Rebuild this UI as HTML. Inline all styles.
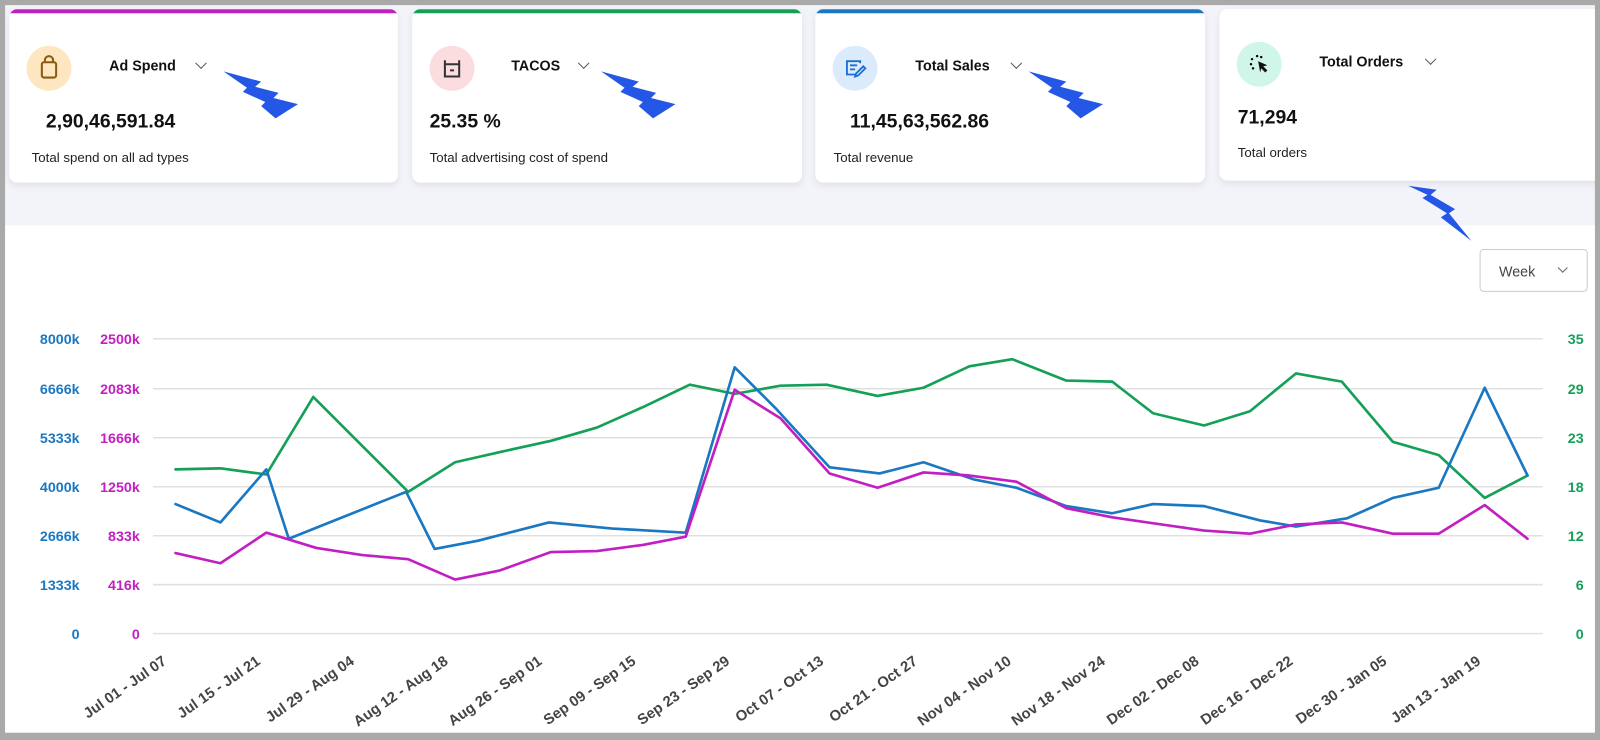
<!DOCTYPE html>
<html><head><meta charset="utf-8"><style>
*{margin:0;padding:0;box-sizing:border-box}
body{width:1600px;height:740px;overflow:hidden;background:#a9a9a9;font-family:"Liberation Sans",sans-serif;position:relative}
#w{position:absolute;left:0;top:0;width:1568px;height:725px;transform:scale(1.0204);transform-origin:0 0}
.frame{position:absolute;left:5px;top:5px;width:1558px;height:713px;background:#f3f4fa;overflow:hidden}
.card{position:absolute;top:4px;height:170px;background:#fff;border-radius:8px;box-shadow:0 3px 8px rgba(0,0,0,.08);overflow:hidden}
.bar{position:absolute;left:0;right:0;top:0;height:4px}
.ic{position:absolute;width:44px;height:44px;border-radius:50%;top:36px;left:17px}
.ttl{position:absolute;top:47px;font-size:14px;font-weight:bold;color:#111}
.chev{position:absolute;top:49px;width:8px;height:8px;border-right:1.3px solid #555;border-bottom:1.3px solid #555;transform:rotate(45deg)}
.val{position:absolute;font-size:19px;font-weight:bold;color:#111}
.sub{position:absolute;font-size:13px;color:#222}
.chart{position:absolute;left:0;top:216px;width:1558px;height:500px;background:#fff}
.week{position:absolute;left:1445px;top:239px;width:106px;height:42px;border:1px solid #ccc;border-radius:4px;background:#fff;font-size:14px;color:#444;padding:13px 0 0 18px}
.week i{position:absolute;left:77px;top:14px;width:7px;height:7px;border-right:1.2px solid #666;border-bottom:1.2px solid #666;transform:rotate(45deg)}
svg{position:absolute;left:0;top:0}
</style></head><body><div id="w">
<div class="frame">
<div class="card" style="left:4px;width:381px"><div class="bar" style="background:#c21fc2"></div>
<div class="ic" style="background:#fde6c0"><svg width="44" height="44" viewBox="0 0 44 44"><rect x="15" y="16" width="14" height="15" rx="2" fill="none" stroke="#8a5a10" stroke-width="2"/><path d="M18 16v-2a4 4 0 0 1 8 0v2" fill="none" stroke="#8a5a10" stroke-width="2"/></svg></div>
<div class="ttl" style="left:98px">Ad Spend</div><div class="chev" style="left:184px"></div>
<div class="val" style="left:36px;top:100px">2,90,46,591.84</div>
<div class="sub" style="left:22px;top:138px">Total spend on all ad types</div></div>

<div class="card" style="left:399px;width:382px"><div class="bar" style="background:#14a058"></div>
<div class="ic" style="background:#fbdde0"><svg width="44" height="44" viewBox="0 0 44 44"><path d="M15 14v16h14V14M15 18h14M20 24h4" fill="none" stroke="#333" stroke-width="2"/></svg></div>
<div class="ttl" style="left:97px">TACOS</div><div class="chev" style="left:164px"></div>
<div class="val" style="left:17px;top:100px">25.35 %</div>
<div class="sub" style="left:17px;top:138px">Total advertising cost of spend</div></div>

<div class="card" style="left:794px;width:382px"><div class="bar" style="background:#1a78c2"></div>
<div class="ic" style="background:#dcebfb"><svg width="44" height="44" viewBox="0 0 44 44"><path d="M27 17V15H14v13h8M17 19h7M17 23h5M22 30l1-3 7-7 2 2-7 7z" fill="none" stroke="#1a6fd0" stroke-width="1.8"/></svg></div>
<div class="ttl" style="left:98px">Total Sales</div><div class="chev" style="left:193px"></div>
<div class="val" style="left:34px;top:100px">11,45,63,562.86</div>
<div class="sub" style="left:18px;top:138px">Total revenue</div></div>

<div class="card" style="left:1190px;width:400px;height:168px">
<div class="ic" style="background:#d0f6ea;top:32px"><svg width="44" height="44" viewBox="0 0 44 44"><path d="M21 19l9 4-4 1 4 4-2 2-4-4-1 4z" fill="#111"/><circle cx="20" cy="14" r="1.2"/><circle cx="15" cy="17" r="1.2"/><circle cx="14" cy="22" r="1.2"/><circle cx="24" cy="15" r="1.2"/><circle cx="16" cy="26" r="1.2"/></svg></div>
<div class="ttl" style="left:98px;top:43px">Total Orders</div><div class="chev" style="left:203px;top:45px"></div>
<div class="val" style="left:18px;top:96px">71,294</div>
<div class="sub" style="left:18px;top:133px">Total orders</div></div>

<div class="chart"></div>
<div class="week">Week<i></i></div>
</div>
<svg width="1568" height="725" viewBox="0 0 1568 725">
<defs><polygon id="b" points="0,0 37,10 31,15 54,21 49,26 73,32 51,46 37,34 41,30 19,20 23,16"/></defs>
<use href="#b" x="219" y="70" fill="#2457e6"/>
<use href="#b" x="589" y="70" fill="#2457e6"/>
<use href="#b" x="1008" y="70" fill="#2457e6"/>
<polygon points="1380,182 1408,186 1402,191 1426,205 1420,209 1442,236 1412,213 1418,209 1394,194 1399,191" fill="#2457e6"/>
<g stroke="#e0e0e0" stroke-width="1.5">
<line x1="150" y1="332" x2="1512" y2="332"/><line x1="150" y1="381" x2="1512" y2="381"/><line x1="150" y1="429" x2="1512" y2="429"/><line x1="150" y1="477" x2="1512" y2="477"/><line x1="150" y1="525" x2="1512" y2="525"/><line x1="150" y1="573" x2="1512" y2="573"/><line x1="150" y1="621" x2="1512" y2="621"/>
</g>
<g font-size="14" font-weight="bold" text-anchor="end" fill="#1a78c2">
<text x="78" y="337">8000k</text><text x="78" y="386">6666k</text><text x="78" y="434">5333k</text><text x="78" y="482">4000k</text><text x="78" y="530">2666k</text><text x="78" y="578">1333k</text><text x="78" y="626">0</text></g>
<g font-size="14" font-weight="bold" text-anchor="end" fill="#c21fc2">
<text x="137" y="337">2500k</text><text x="137" y="386">2083k</text><text x="137" y="434">1666k</text><text x="137" y="482">1250k</text><text x="137" y="530">833k</text><text x="137" y="578">416k</text><text x="137" y="626">0</text></g>
<g font-size="14" font-weight="bold" text-anchor="end" fill="#14a058">
<text x="1552" y="337">35</text><text x="1552" y="386">29</text><text x="1552" y="434">23</text><text x="1552" y="482">18</text><text x="1552" y="530">12</text><text x="1552" y="578">6</text><text x="1552" y="626">0</text></g>
<g fill="none" stroke-width="2.6" stroke-linejoin="round" stroke-linecap="round">
<polyline stroke="#14a058" points="172,460 216,459 261,465 307,389 355,437 400,482 446,453 490,443 540,432 585,419 630,399 676,377 720,386 765,378 810,377 860,388 905,380 950,359 992,352 1045,373 1090,374 1130,405 1180,417 1225,403 1270,366 1315,374 1365,433 1410,446 1455,488 1497,466"/>
<polyline stroke="#1a78c2" points="172,494 216,512 261,460 283,528 328,510 398,482 426,538 468,530 538,512 600,518 672,522 720,360 760,400 813,458 862,464 905,453 955,470 996,478 1045,496 1090,503 1130,494 1180,496 1235,510 1270,516 1320,508 1365,488 1410,478 1455,380 1497,466"/>
<polyline stroke="#c21fc2" points="172,542 216,552 261,522 310,537 355,544 400,548 446,568 490,559 540,541 585,540 630,534 672,526 720,382 765,410 813,464 860,478 905,463 950,466 996,472 1045,498 1090,507 1180,520 1225,523 1270,514 1315,512 1365,523 1410,523 1455,495 1497,528"/>
</g>
<g font-size="14.5" font-weight="bold" fill="#444" text-anchor="end">
<text transform="translate(164,650) rotate(-35)">Jul 01 - Jul 07</text>
<text transform="translate(256,650) rotate(-35)">Jul 15 - Jul 21</text>
<text transform="translate(348,650) rotate(-35)">Jul 29 - Aug 04</text>
<text transform="translate(440,650) rotate(-35)">Aug 12 - Aug 18</text>
<text transform="translate(532,650) rotate(-35)">Aug 26 - Sep 01</text>
<text transform="translate(624,650) rotate(-35)">Sep 09 - Sep 15</text>
<text transform="translate(716,650) rotate(-35)">Sep 23 - Sep 29</text>
<text transform="translate(808,650) rotate(-35)">Oct 07 - Oct 13</text>
<text transform="translate(900,650) rotate(-35)">Oct 21 - Oct 27</text>
<text transform="translate(992,650) rotate(-35)">Nov 04 - Nov 10</text>
<text transform="translate(1084,650) rotate(-35)">Nov 18 - Nov 24</text>
<text transform="translate(1176,650) rotate(-35)">Dec 02 - Dec 08</text>
<text transform="translate(1268,650) rotate(-35)">Dec 16 - Dec 22</text>
<text transform="translate(1360,650) rotate(-35)">Dec 30 - Jan 05</text>
<text transform="translate(1452,650) rotate(-35)">Jan 13 - Jan 19</text>
</g>
</svg>
</div></body></html>
